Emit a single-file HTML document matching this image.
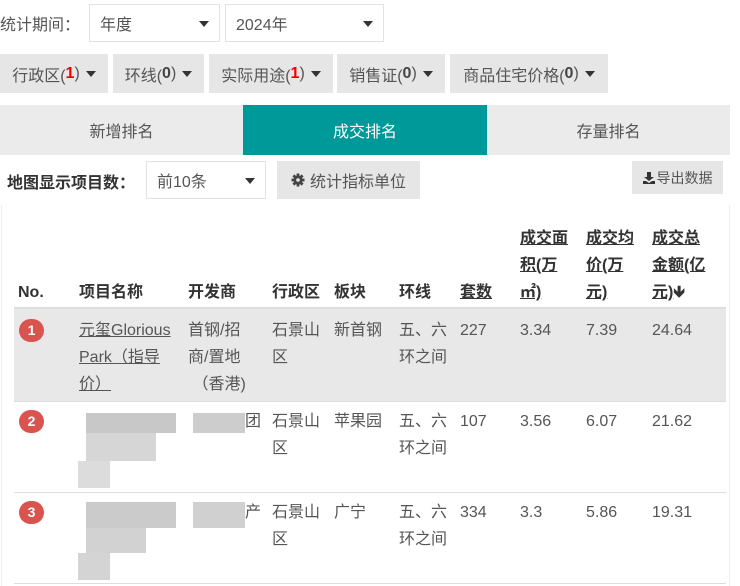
<!DOCTYPE html>
<html><head><meta charset="utf-8"><style>
*{margin:0;padding:0;box-sizing:border-box}
body{width:740px;height:586px;overflow:hidden;background:#fff;font-family:"Liberation Sans","Noto Sans CJK SC",sans-serif;font-size:16px;color:#555;position:relative}
.a{position:absolute;white-space:nowrap}
.sel{position:absolute;border:1px solid #e3e3e3;background:#fff;color:#555;padding-left:10px;display:flex;align-items:center}
.sel:after{content:"";position:absolute;right:10px;top:50%;margin-top:-2px;border-left:5px solid transparent;border-right:5px solid transparent;border-top:6px solid #333}
.btn{position:absolute;background:#e6e6e6;color:#555;display:flex;align-items:center;justify-content:center}
.car{display:inline-block;margin-left:6px;border-left:5px solid transparent;border-right:5px solid transparent;border-top:6px solid #333;vertical-align:middle}
.r{color:#e00;font-weight:bold}.b{font-weight:bold;color:#444}
.tab{position:absolute;top:105px;height:50px;display:flex;align-items:center;justify-content:center;background:#ebebeb;color:#555}
.h{position:absolute;font-weight:bold;color:#333;line-height:27px}
.u{text-decoration:underline}
.c{position:absolute;line-height:27px;color:#555}
.badge{position:absolute;left:19px;width:25px;height:23px;border-radius:12px;background:#d9534f;color:#fff;font-weight:bold;font-size:14px;text-align:center;line-height:23px}
.m{position:absolute;background:#c4c4c4}
</style></head><body>
<div class="a" style="left:0;top:11px;color:#555">统计期间：</div>
<div class="sel" style="left:89px;top:4px;width:131px;height:38px">年度</div>
<div class="sel" style="left:225px;top:4px;width:159px;height:38px">2024年</div>

<div class="btn" style="left:0;top:54px;width:108px;height:39px">行政区(<span class="r">1</span>)<span class="car"></span></div>
<div class="btn" style="left:113px;top:54px;width:91px;height:39px">环线(<span class="b">0</span>)<span class="car"></span></div>
<div class="btn" style="left:209px;top:54px;width:124px;height:39px">实际用途(<span class="r">1</span>)<span class="car"></span></div>
<div class="btn" style="left:337px;top:54px;width:108px;height:39px">销售证(<span class="b">0</span>)<span class="car"></span></div>
<div class="btn" style="left:450px;top:54px;width:158px;height:39px">商品住宅价格(<span class="b">0</span>)<span class="car"></span></div>

<div class="tab" style="left:0;width:243px">新增排名</div>
<div class="tab" style="left:243px;width:244px;background:#009999;color:#fff">成交排名</div>
<div class="tab" style="left:487px;width:243px">存量排名</div>

<div class="a" style="left:7px;top:169px;font-weight:bold;color:#333">地图显示项目数：</div>
<div class="sel" style="left:146px;top:161px;width:120px;height:38px">前10条</div>
<div class="btn" style="left:277px;top:161px;width:143px;height:38px"><svg width="14" height="14" viewBox="0 0 14 14" style="margin-right:5px"><g fill="#444"><circle cx="7" cy="7" r="4.6"/><rect x="5.6" y="0.5" width="2.8" height="13"/><rect x="0.5" y="5.6" width="13" height="2.8"/><rect x="5.6" y="0.5" width="2.8" height="13" transform="rotate(45 7 7)"/><rect x="5.6" y="0.5" width="2.8" height="13" transform="rotate(-45 7 7)"/></g><circle cx="7" cy="7" r="1.8" fill="#e6e6e6"/></svg>统计指标单位</div>
<div class="btn" style="left:632px;top:161px;width:91px;height:33px;font-size:14px"><svg width="12" height="12" viewBox="0 0 12 12" style="margin-right:2px"><path d="M4 0h4v5h3L6 9 1 5h3z M0 9h3l3 2 3-2h3v3H0z" fill="#333"/></svg>导出数据</div>

<div style="position:absolute;left:1px;top:205px;width:1px;height:381px;background:#eee"></div>
<div style="position:absolute;left:729px;top:205px;width:1px;height:381px;background:#eee"></div>

<div class="h" style="left:18px;top:279px">No.</div>
<div class="h" style="left:79px;top:279px">项目名称</div>
<div class="h" style="left:188px;top:279px">开发商</div>
<div class="h" style="left:272px;top:279px">行政区</div>
<div class="h" style="left:334px;top:279px">板块</div>
<div class="h" style="left:399px;top:279px">环线</div>
<div class="h u" style="left:460px;top:279px">套数</div>
<div class="h u" style="left:520px;top:225px">成交面<br>积(万<br>㎡)</div>
<div class="h u" style="left:586px;top:225px">成交均<br>价(万<br>元)</div>
<div class="h" style="left:652px;top:225px"><span class="u">成交总<br>金额(亿<br>元)</span>🡻</div>
<div style="position:absolute;left:14px;top:307px;width:712px;height:2px;background:#ddd"></div>

<div style="position:absolute;left:14px;top:309px;width:712px;height:92px;background:#e8e8e8"></div>
<div class="badge" style="top:319px">1</div>
<div class="c u" style="left:79px;top:317px">元玺Glorious<br>Park（指导<br>价）</div>
<div class="c" style="left:188px;top:317px">首钢/招<br>商/置地<br>&nbsp;（香港)</div>
<div class="c" style="left:272px;top:317px">石景山<br>区</div>
<div class="c" style="left:334px;top:317px">新首钢</div>
<div class="c" style="left:399px;top:317px">五、六<br>环之间</div>
<div class="c" style="left:460px;top:317px">227</div>
<div class="c" style="left:520px;top:317px">3.34</div>
<div class="c" style="left:586px;top:317px">7.39</div>
<div class="c" style="left:652px;top:317px">24.64</div>
<div style="position:absolute;left:14px;top:401px;width:712px;height:1px;background:#ddd"></div>

<div class="badge" style="top:410px">2</div>
<div class="m" style="left:86px;top:413px;width:90px;height:20px;background:#c8c8c8"></div>
<div class="m" style="left:86px;top:433px;width:70px;height:28px;background:#d6d6d6"></div>
<div class="m" style="left:78px;top:461px;width:32px;height:27px;background:#dcdcdc"></div>
<div class="m" style="left:193px;top:413px;width:52px;height:20px;background:#cdcdcd"></div>
<div class="c" style="left:245px;top:408px">团</div>
<div class="c" style="left:272px;top:408px">石景山<br>区</div>
<div class="c" style="left:334px;top:408px">苹果园</div>
<div class="c" style="left:399px;top:408px">五、六<br>环之间</div>
<div class="c" style="left:460px;top:408px">107</div>
<div class="c" style="left:520px;top:408px">3.56</div>
<div class="c" style="left:586px;top:408px">6.07</div>
<div class="c" style="left:652px;top:408px">21.62</div>
<div style="position:absolute;left:14px;top:492px;width:712px;height:1px;background:#ddd"></div>

<div class="badge" style="top:501px">3</div>
<div class="m" style="left:86px;top:502px;width:90px;height:26px;background:#cbcbcb"></div>
<div class="m" style="left:86px;top:528px;width:60px;height:25px;background:#d2d2d2"></div>
<div class="m" style="left:78px;top:553px;width:32px;height:27px;background:#d4d4d4"></div>
<div class="m" style="left:193px;top:502px;width:52px;height:26px;background:#d0d0d0"></div>
<div class="c" style="left:245px;top:499px">产</div>
<div class="c" style="left:272px;top:499px">石景山<br>区</div>
<div class="c" style="left:334px;top:499px">广宁</div>
<div class="c" style="left:399px;top:499px">五、六<br>环之间</div>
<div class="c" style="left:460px;top:499px">334</div>
<div class="c" style="left:520px;top:499px">3.3</div>
<div class="c" style="left:586px;top:499px">5.86</div>
<div class="c" style="left:652px;top:499px">19.31</div>
<div style="position:absolute;left:14px;top:583px;width:712px;height:1px;background:#ddd"></div>
</body></html>
